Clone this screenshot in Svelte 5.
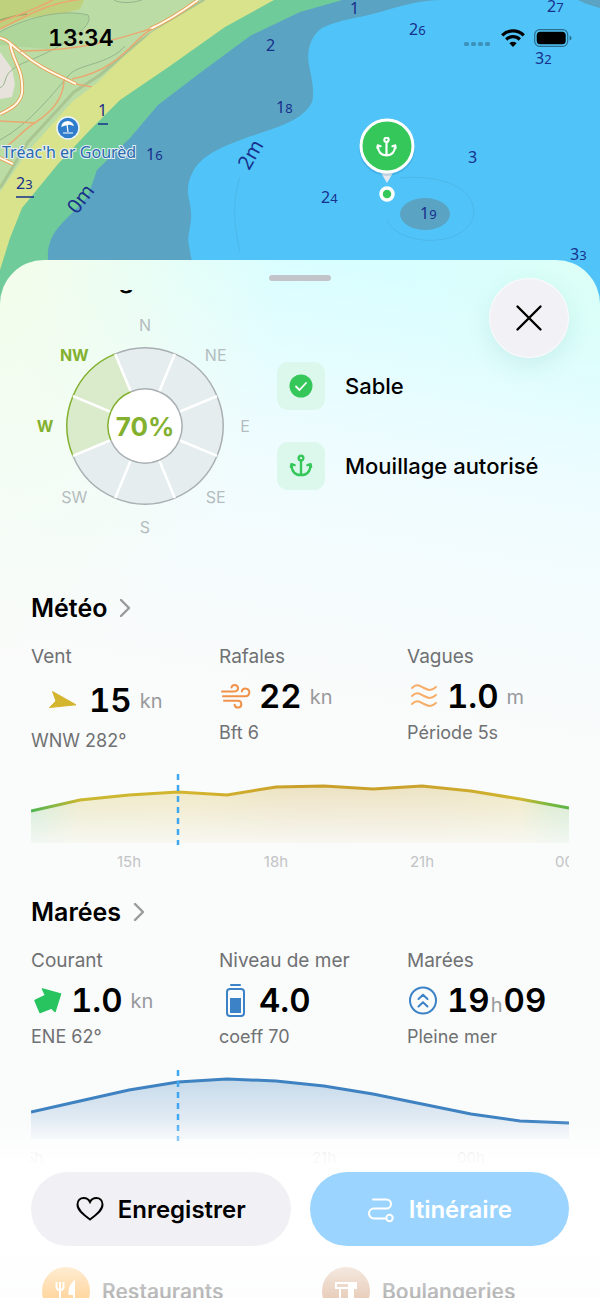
<script lang="ts">
  type Reading = {
    label: string;
    icon: string;
    value: string;
    unit?: string;
    rest?: string;
    note: string;
  };

  const sectors = ['N', 'NE', 'E', 'SE', 'S', 'SW', 'W', 'NW'];
  const sheltered = ['W', 'NW'];

  const weather: Reading[] = [
    { label: 'Vent', icon: 'wind', value: '15', unit: 'kn', note: 'WNW 282°' },
    { label: 'Rafales', icon: 'gust', value: '22', unit: 'kn', note: 'Bft 6' },
    { label: 'Vagues', icon: 'waves', value: '1.0', unit: 'm', note: 'Période 5s' },
  ];

  const tides: Reading[] = [
    { label: 'Courant', icon: 'current', value: '1.0', unit: 'kn', note: 'ENE 62°' },
    { label: 'Niveau de mer', icon: 'level', value: '4.0', note: 'coeff 70' },
    { label: 'Marées', icon: 'rising', value: '19', unit: 'h', rest: '09', note: 'Pleine mer' },
  ];

  const windCurve = [37, 26, 21, 18, 21, 13, 12, 15, 12, 17, 25, 34];
  const tideCurve = [42, 31, 20, 12, 9, 11, 16, 24, 34, 44, 51, 53];

  const windHours = [
    { x: 98, text: '15h' },
    { x: 245, text: '18h' },
    { x: 391, text: '21h' },
    { x: 538, text: '00h' },
  ];
  const tideHours = [
    { x: 0, text: '15h' },
    { x: 293, text: '21h' },
    { x: 440, text: '00h' },
  ];

  // depth soundings, metres then decimetres
  const soundings = [
    { x: 350, y: 14, m: '1', d: '' },
    { x: 547, y: 12, m: '2', d: '7' },
    { x: 409, y: 35, m: '2', d: '6' },
    { x: 266, y: 51, m: '2', d: '' },
    { x: 535, y: 64, m: '3', d: '2' },
    { x: 276, y: 113, m: '1', d: '8' },
    { x: 98, y: 116, m: '1', d: '', dries: 10 },
    { x: 146, y: 160, m: '1', d: '6' },
    { x: 468, y: 163, m: '3', d: '' },
    { x: 16, y: 189, m: '2', d: '3', dries: 18 },
    { x: 321, y: 203, m: '2', d: '4' },
    { x: 420, y: 219, m: '1', d: '9' },
    { x: 570, y: 260, m: '3', d: '3' },
  ];

  function polar(r: number, deg: number) {
    const a = ((deg - 90) * Math.PI) / 180;
    return `${(114 + r * Math.cos(a)).toFixed(1)} ${(114 + r * Math.sin(a)).toFixed(1)}`;
  }

  function slice(i: number) {
    const a = i * 45 - 22.5;
    const b = a + 45;
    return `M${polar(37, a)} L${polar(78, a)} A78 78 0 0 1 ${polar(78, b)} L${polar(37, b)} A37 37 0 0 0 ${polar(37, a)} Z`;
  }

  function arc(r: number, i: number) {
    return `M${polar(r, i * 45 - 22.5)} A${r} ${r} 0 0 1 ${polar(r, i * 45 + 22.5)}`;
  }

  function labelX(i: number) {
    return 114 + 100 * Math.sin((i * Math.PI) / 4);
  }

  function labelY(i: number) {
    return 120 - 101 * Math.cos((i * Math.PI) / 4);
  }

  function line(values: number[]) {
    return values.map((v, i) => `${Math.round((i * 538) / 11)},${v}`).join(' ');
  }
</script>

{#snippet anchor()}
  <svg class="anchor" viewBox="0 0 24 24" aria-hidden="true">
    <circle cx="12" cy="3.4" r="2.6" />
    <path d="M12 6v16M1 13l.5-3 3.500 1M23 13l-.5-3-3.500 1M1.500 10.500C2 18 6 22 12 22s10-4 10.500-11.500" />
  </svg>
{/snippet}

{#snippet heading(title: string)}
  <h2>
    <a href="#{title}">
      {title}
      <svg class="chevron" viewBox="0 0 12 20" aria-hidden="true"><path d="M2 2l8 8-8 8" /></svg>
    </a>
  </h2>
{/snippet}

{#snippet icon(name: string)}
  {#if name === 'wind'}
    <svg class="big" viewBox="0 0 50 45" aria-hidden="true">
      <path d="M21.500 13.500L45 26.800 18.500 29.500 25 23z" fill="#d4b52e" stroke="#d4b52e" stroke-linejoin="round" />
    </svg>
  {:else}
    <svg class="small" viewBox="0 0 32 37" aria-hidden="true">
      {#if name === 'gust'}
        <g fill="none" stroke="#f0924a" stroke-width="2" stroke-linecap="round">
          <path d="M3 13.500h11c3.500 0 5-1.400 5-3.300a3.300 3.300 0 0 0-6.500-.7" />
          <path d="M4 18.200h22.500a3.800 3.800 0 1 0-3.700-4.700" />
          <path d="M5 22.800h14a3.400 3.400 0 1 1-3.400 4" />
        </g>
      {:else if name === 'waves'}
        <g fill="none" stroke="#f6ad68" stroke-width="2" stroke-linecap="round">
          {#each [10, 18, 26] as y}
            <path d="M5 {y}c5-5 8-2 12 0s7 3.500 12-1" />
          {/each}
        </g>
      {:else if name === 'current'}
        <path
          d="M11.500 7L29.500 12 24 29.500 20.500 26 9 30.500 4 18.500 14.500 13.500z"
          fill="#27c45f"
          stroke="#27c45f"
          stroke-width="1.500"
          stroke-linejoin="round"
        />
      {:else if name === 'level'}
        <rect x="8" y="7" width="17" height="27" rx="3" fill="none" stroke="#3b82c6" stroke-width="2" />
        <path d="M12 3h9" stroke="#3b82c6" stroke-width="2" stroke-linecap="round" />
        <rect x="11" y="16" width="11" height="15" fill="#3b82c6" />
      {:else if name === 'rising'}
        <g fill="none" stroke="#3b82c6" stroke-width="2" stroke-linecap="round" stroke-linejoin="round">
          <circle cx="16" cy="18.500" r="13" />
          <path d="M11.500 17l4.500-4.200 4.500 4.200M11.500 24.500l4.500-4.200 4.500 4.200" />
        </g>
      {/if}
    </svg>
  {/if}
{/snippet}

{#snippet readings(list: Reading[])}
  <dl class="readings">
    {#each list as r}
      <div>
        <dt>{r.label}</dt>
        <dd class="value" class:time={!!r.rest}>
          {@render icon(r.icon)}
          <span class="figure">
            <b>{r.value}</b>{#if r.unit}<span class="unit">{r.unit}</span>{/if}{#if r.rest}<b>{r.rest}</b>{/if}
          </span>
        </dd>
        <dd class="note">{r.note}</dd>
      </div>
    {/each}
  </dl>
{/snippet}

{#snippet chart(id: string, values: number[], hours: { x: number; text: string }[])}
  <svg class="chart" viewBox="0 0 538 98" role="img" aria-label={id}>
    <polygon points="0,69 {line(values)} 538,69" fill="url(#{id}-line)" mask="url(#fade)" />
    <polyline points={line(values)} fill="none" stroke="url(#{id}-line)" stroke-width="3" />
    <path class="now" d="M147 0v71" />
    {#each hours as h}
      <text x={h.x} y="93">{h.text}</text>
    {/each}
  </svg>
{/snippet}

<main>
  <header class="map">
    <svg class="chartmap" viewBox="0 0 600 304" preserveAspectRatio="xMidYMin slice" aria-hidden="true">
      <rect width="600" height="304" fill="#bcdca6" />
      <path d="M0 0h84L80 9 62 14 28 18 0 29z" fill="#bfd17c" />
      <path d="M0 32C20 20 60 8 88 15c5 10-20 30-40 34L0 45z" fill="#afd69a" />
      <path d="M0 52l12 17 3 15-3 13-12 2z" fill="#e8e2dc" />
      <g fill="none" stroke="#93b58b" stroke-width="1">
        <path d="M0 32C20 20 60 8 88 15c8 12-30 34-60 46S10 82 0 88M114 0c6 4 22 3 30-1M0 140c30-16 54-48 70-66 10-10 40-10 55-28" />
      </g>
      <path d="M0 20l15-4 12-2" stroke="#9ba469" stroke-width="1.500" fill="none" />
      <path d="M204 0C180 18 152 30 133 47L100 75 74 92 52 116 28 142 0 188" fill="none" stroke="#a9c592" stroke-width="3" />
      <g fill="none" stroke="#e99a4d" stroke-width="3.600">
        <path d="M0 38c8 1 12 8 21 14 16 14 30 20 55 32M10 43c3 20 14 26 12 50-2 12-14 17-22 21M198 0c-18 13-30 21-48 29" />
        <path d="M0 158l13 6" />
      </g>
      <g fill="none" stroke="#fffbe8" stroke-width="2">
        <path d="M0 38c8 1 12 8 21 14 16 14 30 20 55 32M10 43c3 20 14 26 12 50-2 12-14 17-22 21M198 0c-18 13-30 21-48 29" />
        <path d="M0 158l13 6" />
      </g>
      <g fill="none" stroke="#eaa871" stroke-width="1.500">
        <path d="M150 29C120 38 90 50 20 51M152 29c-20 10-30 40-80 50M64 79c0 20-14 34-28 43S18 138 8 145M0 121l36 2M0 29C30 14 50 2 84-1M0 22C20 14 40 8 54-1M76 84l16 3" />
      </g>
      <path d="M206 0L152 32 122 58 98 82 72 102 40 138 26 154 0 192V304H600V0z" fill="#d8e38b" />
      <path d="M274 0L225 27 170 66 120 100 90 130 58 164 22 208 10 238 0 270V304H600V0z" fill="#6fcb99" />
      <path d="M346-1L300 12 250 36 200 73 158 105 130 138 97 170 88 196C75 212 60 222 52 237Q47 248 48 258V304H600V0z" fill="#5ba3c3" />
      <path
        d="M442 0C420 0 404 5 380 12S340 19 322 28C308 38 307 55 309 65S316 96 311 104 299 118 285 124C260 135 210 145 195 168 185 184 188 196 190 204 194 225 186 232 189 246L192 262V304H600V8Q585 4 578 0z"
        fill="#50c4f8"
      />
      <ellipse cx="425" cy="214" rx="25" ry="16" fill="#5ba3c3" />
      <g fill="none" stroke="#479fc8" stroke-width="1" opacity="0.350">
        <path d="M240 177c-8 25-6 50 0 75M400 178c30-3 75 4 74 36-6 34-74 34-87 6" />
      </g>
      <g class="soundings">
        {#each soundings as s}
          <text x={s.x} y={s.y}>{s.m}<tspan class="dm">{s.d}</tspan></text>
          {#if s.dries}
            <path d="M{s.x} {s.y + 8}h{s.dries}" stroke="#17308c" stroke-width="1.500" />
          {/if}
        {/each}
        <text class="contour" transform="translate(77 215) rotate(-53)">0m</text>
        <text class="contour" transform="translate(249 171) rotate(-60)">2m</text>
      </g>
      <circle cx="68" cy="128" r="11" fill="#2f7dcb" stroke="#eef6fb" stroke-width="1.500" />
      <path d="M62 126c1-5 8-6 11-1l-4-1-2 1-2 0zM67 124l1 8M63 133h10" fill="#fff" stroke="#fff" stroke-width="1.200" />
      <text class="place" x="2" y="158">Tréac'h er Gourèd</text>
      <path d="M380 171h14l-7 12z" fill="#e6e9ee" />
      <circle cx="387" cy="148" r="28" fill="#16639a" opacity="0.180" />
      <circle cx="387" cy="146" r="26" fill="#35c759" stroke="#fff" stroke-width="3" />
      <svg x="376" y="137" width="21" height="20">{@render anchor()}</svg>
      <circle cx="387" cy="194" r="6" fill="#35c759" stroke="#fff" stroke-width="3.500" />
    </svg>

    <div class="status">
      <time>13:34</time>
      <div class="signals">
        <svg class="dots" viewBox="0 0 28 6" aria-hidden="true">
          {#each [0, 7, 14, 21] as x}
            <rect {x} y="1" width="5" height="4" rx="1.500" fill="#3c92bb" />
          {/each}
        </svg>
        <svg class="wifi" viewBox="0 0 24 18" aria-hidden="true">
          <g fill="none" stroke="#000" stroke-width="3.200">
            <path d="M1.200 6.300a15.500 15.500 0 0 1 21.600 0M5.200 10.500a9.700 9.700 0 0 1 13.600 0" />
          </g>
          <path d="M12 18l-3.600-3.700a5.100 5.100 0 0 1 7.200 0z" />
        </svg>
        <svg class="battery" viewBox="0 0 38 18" aria-hidden="true">
          <rect x="0.700" y="0.700" width="33" height="16.600" rx="5" fill="none" stroke="#2a6d8c" stroke-width="1.200" />
          <rect x="2.700" y="2.700" width="29" height="12.600" rx="3.500" />
          <path d="M35.600 6.500v5q2-1 2-2.500t-2-2.500z" fill="#2a6d8c" />
        </svg>
      </div>
    </div>
  </header>

  <section class="sheet">
    <div class="grabber"></div>
    <button class="close" aria-label="Fermer">
      <svg viewBox="0 0 28 28" aria-hidden="true"><path d="M2.500 2.500l23 23M25.500 2.500l-23 23" /></svg>
    </button>

    <div class="content">
      <h2 class="scrolled">Mouillage</h2>

      <div class="spot">
        <svg class="compass" viewBox="0 0 228 228" role="img" aria-label="Protection">
          {#each sectors as s, i}
            <path d={slice(i)} fill={sheltered.includes(s) ? '#d9ebcb' : '#e5edef'} />
          {/each}
          <circle cx="114" cy="114" r="37" fill="#fff" />
          {#each sectors as s, i}
            <path class="rim" class:on={sheltered.includes(s)} d={arc(78, i)} />
            <path class="rim" class:on={sheltered.includes(s)} d={arc(37, i)} />
          {/each}
          {#each sectors as s, i}
            <path d="M{polar(38, i * 45 + 22.5)} L{polar(78, i * 45 + 22.5)}" stroke="#fff" stroke-width="2.500" />
            <text class:on={sheltered.includes(s)} x={labelX(i)} y={labelY(i)}>{s}</text>
          {/each}
          <text class="score" x="114" y="124">70%</text>
        </svg>

        <ul class="facts">
          <li>
            <span class="badge">
              <svg viewBox="0 0 24 24" aria-hidden="true">
                <circle cx="12" cy="12" r="11.500" fill="#35c759" />
                <path d="M7 12.500l3.500 3.500 6.500-7" fill="none" stroke="#fff" stroke-width="1.800" stroke-linecap="round" stroke-linejoin="round" />
              </svg>
            </span>
            Sable
          </li>
          <li>
            <span class="badge">{@render anchor()}</span>
            Mouillage autorisé
          </li>
        </ul>
      </div>

      {@render heading('Météo')}
      {@render readings(weather)}
      {@render chart('vent', windCurve, windHours)}

      {@render heading('Marées')}
      {@render readings(tides)}
      {@render chart('maree', tideCurve, tideHours)}

      <ul class="nearby">
        <li>
          <svg viewBox="0 0 48 48" aria-hidden="true">
            <circle cx="24" cy="24" r="24" fill="#ff9f1c" />
            <path d="M18 15v18M14.500 15v5q0 3 3.500 3t3.500-3v-5M32 15v18M32 15q-5 4-4.500 12H32z" fill="none" stroke="#fff" stroke-width="2" />
            <path d="M32 15q-5 4-4.500 12H32z" fill="#fff" />
          </svg>
          Restaurants
        </li>
        <li>
          <svg viewBox="0 0 48 48" aria-hidden="true">
            <circle cx="24" cy="24" r="24" fill="#c98b5e" />
            <path d="M14 16h20v5h-3v13H18V21h-4zM18 21h9M27 16v18" fill="none" stroke="#fff" stroke-width="2" />
            <path d="M27 16h7v5h-3v13h-4z" fill="#fff" />
          </svg>
          Boulangeries
        </li>
      </ul>
    </div>
  </section>

  <div class="actions">
    <button class="save">
      <svg viewBox="0 0 28 28" aria-hidden="true">
        <path d="M14 24.500C7 19.500 1.500 15 1.500 9.500 1.500 5.500 4.300 3 7.700 3 10.500 3 12.800 4.500 14 7c1.200-2.500 3.500-4 6.300-4 3.400 0 6.200 2.500 6.200 6.500 0 5.500-5.500 10-12.500 15z" />
      </svg>
      Enregistrer
    </button>
    <button class="route">
      <svg viewBox="0 0 28 28" aria-hidden="true">
        <path d="M6 4.500h13.500a4.500 4.500 0 0 1 0 9H7a5 5 0 0 0 0 10h12" />
        <circle cx="22.500" cy="23" r="3.200" />
      </svg>
      Itinéraire
    </button>
  </div>

  <svg class="defs" width="0" height="0" aria-hidden="true">
    <linearGradient id="vent-line" gradientUnits="userSpaceOnUse" x1="0" x2="538" y1="0" y2="0">
      <stop offset="0" stop-color="#4db654" />
      <stop offset="0.090" stop-color="#c9b732" />
      <stop offset="0.300" stop-color="#d4b52e" />
      <stop offset="0.500" stop-color="#c99f2a" />
      <stop offset="0.750" stop-color="#cba42c" />
      <stop offset="0.910" stop-color="#d0b630" />
      <stop offset="0.960" stop-color="#7cb83f" />
      <stop offset="1" stop-color="#5cb548" />
    </linearGradient>
    <linearGradient id="maree-line" gradientUnits="userSpaceOnUse" x1="0" x2="538" y1="0" y2="0">
      <stop offset="0" stop-color="#3e82c1" />
      <stop offset="1" stop-color="#3e82c1" />
    </linearGradient>
    <linearGradient id="fade-ramp" x1="0" x2="0" y1="0" y2="1">
      <stop offset="0" stop-color="#fff" stop-opacity="0.280" />
      <stop offset="1" stop-color="#fff" stop-opacity="0.040" />
    </linearGradient>
    <mask id="fade" maskUnits="userSpaceOnUse" x="0" y="0" width="538" height="71">
      <rect y="10" width="538" height="61" fill="url(#fade-ramp)" />
    </mask>
  </svg>
</main>

<style>
  :global(body) {
    margin: 0;
  }

  main {
    position: relative;
    display: flex;
    flex-direction: column;
    height: 100vh;
    overflow: hidden;
    background: #fafbfb;
    color: #000;
    font-family: Inter, 'Liberation Sans', sans-serif;
  }

  h2,
  dl,
  dd,
  ul {
    margin: 0;
    padding: 0;
    list-style: none;
  }

  button {
    border: 0;
    padding: 0;
    font: inherit;
    cursor: pointer;
  }

  .defs {
    position: absolute;
  }

  /* map */
  .map {
    flex: none;
    height: 304px;
    position: relative;
  }

  .chartmap {
    display: block;
    width: 100%;
    height: 100%;
  }

  .soundings {
    font: 16px 'Noto Sans', sans-serif;
    fill: #17308c;
  }

  .dm {
    font-size: 13px;
  }

  .contour {
    font-size: 20px;
  }

  .place {
    font: 16px 'Noto Sans', sans-serif;
    fill: #2b68ae;
    stroke: #e4f1f4;
    stroke-width: 2px;
    paint-order: stroke;
  }

  .status {
    position: absolute;
    inset: 22px 28px auto 48px;
    display: flex;
    justify-content: space-between;
    align-items: center;
    height: 32px;
  }

  time {
    font-size: 23px;
    font-weight: 600;
    font-variant-numeric: tabular-nums;
  }

  .signals {
    display: flex;
    align-items: center;
    gap: 9px;
  }

  .dots {
    width: 28px;
    height: 6px;
    align-self: flex-end;
  }

  .wifi {
    width: 24px;
    height: 18px;
  }

  .battery {
    width: 38px;
    height: 18px;
  }

  .anchor {
    fill: none;
    stroke: #fff;
    stroke-width: 2.6;
    stroke-linecap: round;
    stroke-linejoin: round;
    overflow: visible;
  }

  /* sheet */
  .sheet {
    position: relative;
    flex: 1;
    min-height: 0;
    margin-top: -44px;
    border-radius: 44px 44px 0 0;
    overflow: hidden;
    background:
      radial-gradient(280px 420px at 0 0, #f5fdea, transparent),
      radial-gradient(200px 160px at 100% 0, #dcfff6, transparent),
      linear-gradient(190deg, #d8feff 40px, #effcff 240px, #fafbfb 480px);
  }

  .grabber {
    width: 62px;
    height: 6px;
    margin: 15px auto 9px;
    border-radius: 3px;
    background: #c3c4c9;
  }

  .close {
    position: absolute;
    top: 18px;
    right: 31px;
    z-index: 1;
    display: grid;
    place-items: center;
    width: 80px;
    height: 80px;
    border-radius: 50%;
    background: #f2f2f6;
    box-shadow:
      inset 0 0 0 1px #f9fafc,
      0 8px 24px rgba(20, 120, 110, 0.1);
  }

  .close svg {
    width: 28px;
    height: 28px;
    fill: none;
    stroke: #000;
    stroke-width: 2.4;
    stroke-linecap: round;
  }

  .content {
    padding: 0 31px;
    overflow: hidden;
  }

  h2 {
    height: 30px;
    font-size: 25px;
    line-height: 30px;
    font-weight: 600;
  }

  h2 a {
    display: inline-flex;
    align-items: center;
    gap: 12px;
    color: inherit;
    text-decoration: none;
  }

  .scrolled {
    margin-top: -26px;
  }

  .chevron {
    width: 12px;
    height: 20px;
    fill: none;
    stroke: #98999b;
    stroke-width: 2.4;
    stroke-linecap: round;
    stroke-linejoin: round;
  }

  .spot {
    display: flex;
    align-items: center;
    gap: 18px;
    margin: 18px 0 53px;
  }

  .compass {
    flex: none;
    width: 228px;
    height: 228px;
    overflow: visible;
  }

  .compass text {
    font-size: 16px;
    text-anchor: middle;
    fill: #b4bcbf;
  }

  .compass text.on {
    font-weight: 700;
    fill: #83b02f;
  }

  .compass text.score {
    font-size: 26px;
    font-weight: 700;
    fill: #83b02f;
  }

  .rim {
    fill: none;
    stroke: #a9afb2;
    stroke-width: 1.5;
  }

  .rim.on {
    stroke: #83b02f;
  }

  .facts {
    display: grid;
    gap: 32px;
    font-size: 22px;
    font-weight: 500;
  }

  .facts li {
    display: flex;
    align-items: center;
    gap: 20px;
    white-space: nowrap;
  }

  .badge {
    display: grid;
    place-items: center;
    width: 48px;
    height: 48px;
    border-radius: 11px;
    background: #dcf7ec;
  }

  .badge svg {
    width: 24px;
    height: 24px;
    stroke: #35c759;
  }

  .badge svg:not(.anchor) {
    stroke: none;
  }

  .badge .anchor {
    width: 22px;
    height: 22px;
  }

  .readings {
    display: grid;
    grid-template-columns: repeat(3, 1fr);
    gap: 26px;
    margin: 22px 0 21px;
  }

  dt {
    font-size: 19px;
    line-height: 24px;
    color: #6f7173;
    white-space: nowrap;
  }

  .value {
    display: flex;
    align-items: center;
    gap: 8px;
    margin: 9px 0 6px;
  }

  .small {
    flex: none;
    width: 32px;
    height: 37px;
  }

  .big {
    flex: none;
    width: 50px;
    height: 45px;
  }

  .figure {
    display: flex;
    align-items: center;
    gap: 8px;
    line-height: 37px;
    font-variant-numeric: tabular-nums;
  }

  .figure b {
    font-size: 33px;
    font-weight: 600;
  }

  .unit {
    font-size: 20px;
    line-height: 24px;
    color: #98999b;
  }

  .time .figure {
    align-items: baseline;
    gap: 1px;
  }

  .note {
    font-size: 18px;
    line-height: 24px;
    color: #6f7173;
    white-space: nowrap;
  }

  .chart {
    display: block;
    width: 100%;
    margin-bottom: 25px;
    overflow: hidden;
  }

  .chart text {
    font-size: 15px;
    text-anchor: middle;
    fill: #c2c3c5;
  }

  .now {
    stroke: #3fa6f2;
    stroke-width: 2.5;
    stroke-dasharray: 6 5;
  }

  .nearby {
    display: grid;
    grid-template-columns: 280px 1fr;
    margin: 99px 0 0 11px;
    font-size: 21px;
    font-weight: 600;
    color: #4a4a4c;
  }

  .nearby li {
    display: flex;
    align-items: center;
    gap: 12px;
  }

  .nearby svg {
    width: 48px;
    height: 48px;
  }

  .actions {
    position: absolute;
    inset: auto 0 0;
    z-index: 2;
    display: grid;
    grid-template-columns: 1fr 1fr;
    gap: 19px;
    padding: 52px 31px;
    background: linear-gradient(
      rgba(255, 255, 255, 0),
      rgba(255, 255, 255, 0.4) 20px,
      rgba(255, 255, 255, 0.88) 36px,
      #fff 60px,
      #fff 120px,
      rgba(255, 255, 255, 0.58)
    );
  }

  .actions button {
    display: flex;
    align-items: center;
    justify-content: center;
    gap: 14px;
    height: 74px;
    border-radius: 37px;
    font-size: 24px;
    font-weight: 600;
  }

  .actions svg {
    width: 28px;
    height: 28px;
    fill: none;
    stroke: currentColor;
    stroke-width: 2;
    stroke-linecap: round;
  }

  .save {
    background: #f1f1f5;
    color: #000;
  }

  .route {
    background: #9bd5ff;
    color: #fff;
  }
</style>
